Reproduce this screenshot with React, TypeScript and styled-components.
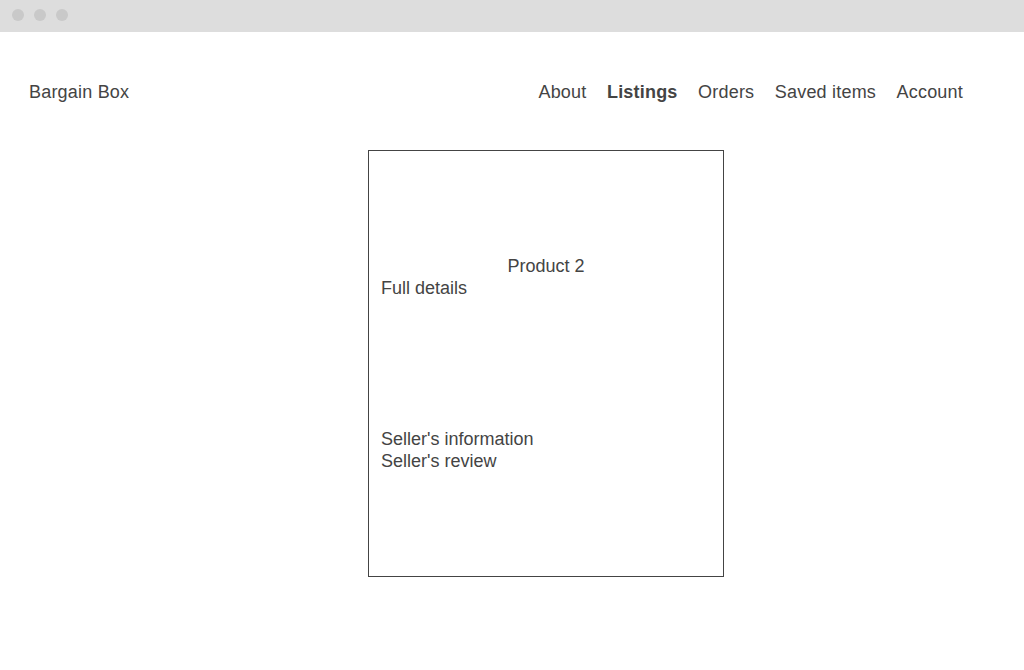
import React from 'react';
import styled, {createGlobalStyle} from 'styled-components';

const GlobalStyle = createGlobalStyle`
    html, body {
        margin: 0;
        padding: 0;
        background: #fff;
    }
    body {
        font-family: "Liberation Sans", Arial, sans-serif;
        font-size: 18px;
        line-height: 22px;
        color: #444;
    }
`;

/* Browser window chrome */
const TitleBar = styled.div`
    height: 32px;
    box-sizing: border-box;
    background: #dddddd;
    display: flex;
    align-items: flex-start;
    gap: 10px;
    padding: 9px 0 0 12px;
`;

const Dot = styled.span`
    width: 12px;
    height: 12px;
    border-radius: 50%;
    background: #c9c9c9;
`;

/* Top navigation bar */
const Header = styled.header`
    display: flex;
    justify-content: space-between;
    align-items: center;
    padding: 49px 61px 0 29px;
    letter-spacing: 0.2px;
`;

const Brand = styled.div``;

const Nav = styled.nav`
    display: flex;
    gap: 20.5px;
`;

const NavLink = styled.a<{ $active?: boolean }>`
    color: #444;
    text-decoration: none;
    font-weight: ${({$active}) => ($active ? 'bold' : 'normal')};
`;

/* Product detail card */
const Card = styled.section`
    box-sizing: border-box;
    width: 356px;
    height: 427px;
    margin: 47px 0 0 368px;
    border: 1px solid #444;
    padding: 104px 12px;
    display: flex;
    flex-direction: column;
`;

const Title = styled.div`
    text-align: center;
`;

const Line = styled.div``;

const SellerBlock = styled.div`
    margin-top: 129px;
`;

const links = ['About', 'Listings', 'Orders', 'Saved items', 'Account'];

const App: React.FC = () => {
    return (
        <>
            <GlobalStyle/>
            <TitleBar>
                <Dot/>
                <Dot/>
                <Dot/>
            </TitleBar>
            <Header>
                <Brand>Bargain Box</Brand>
                <Nav>
                    {links.map((l) => (
                        <NavLink key={l} href="#" $active={l === 'Listings'}>{l}</NavLink>
                    ))}
                </Nav>
            </Header>
            <Card>
                <Title>Product 2</Title>
                <Line>Full details</Line>
                <SellerBlock>
                    <Line>Seller's information</Line>
                    <Line>Seller's review</Line>
                </SellerBlock>
            </Card>
        </>
    );
};

export default App;
